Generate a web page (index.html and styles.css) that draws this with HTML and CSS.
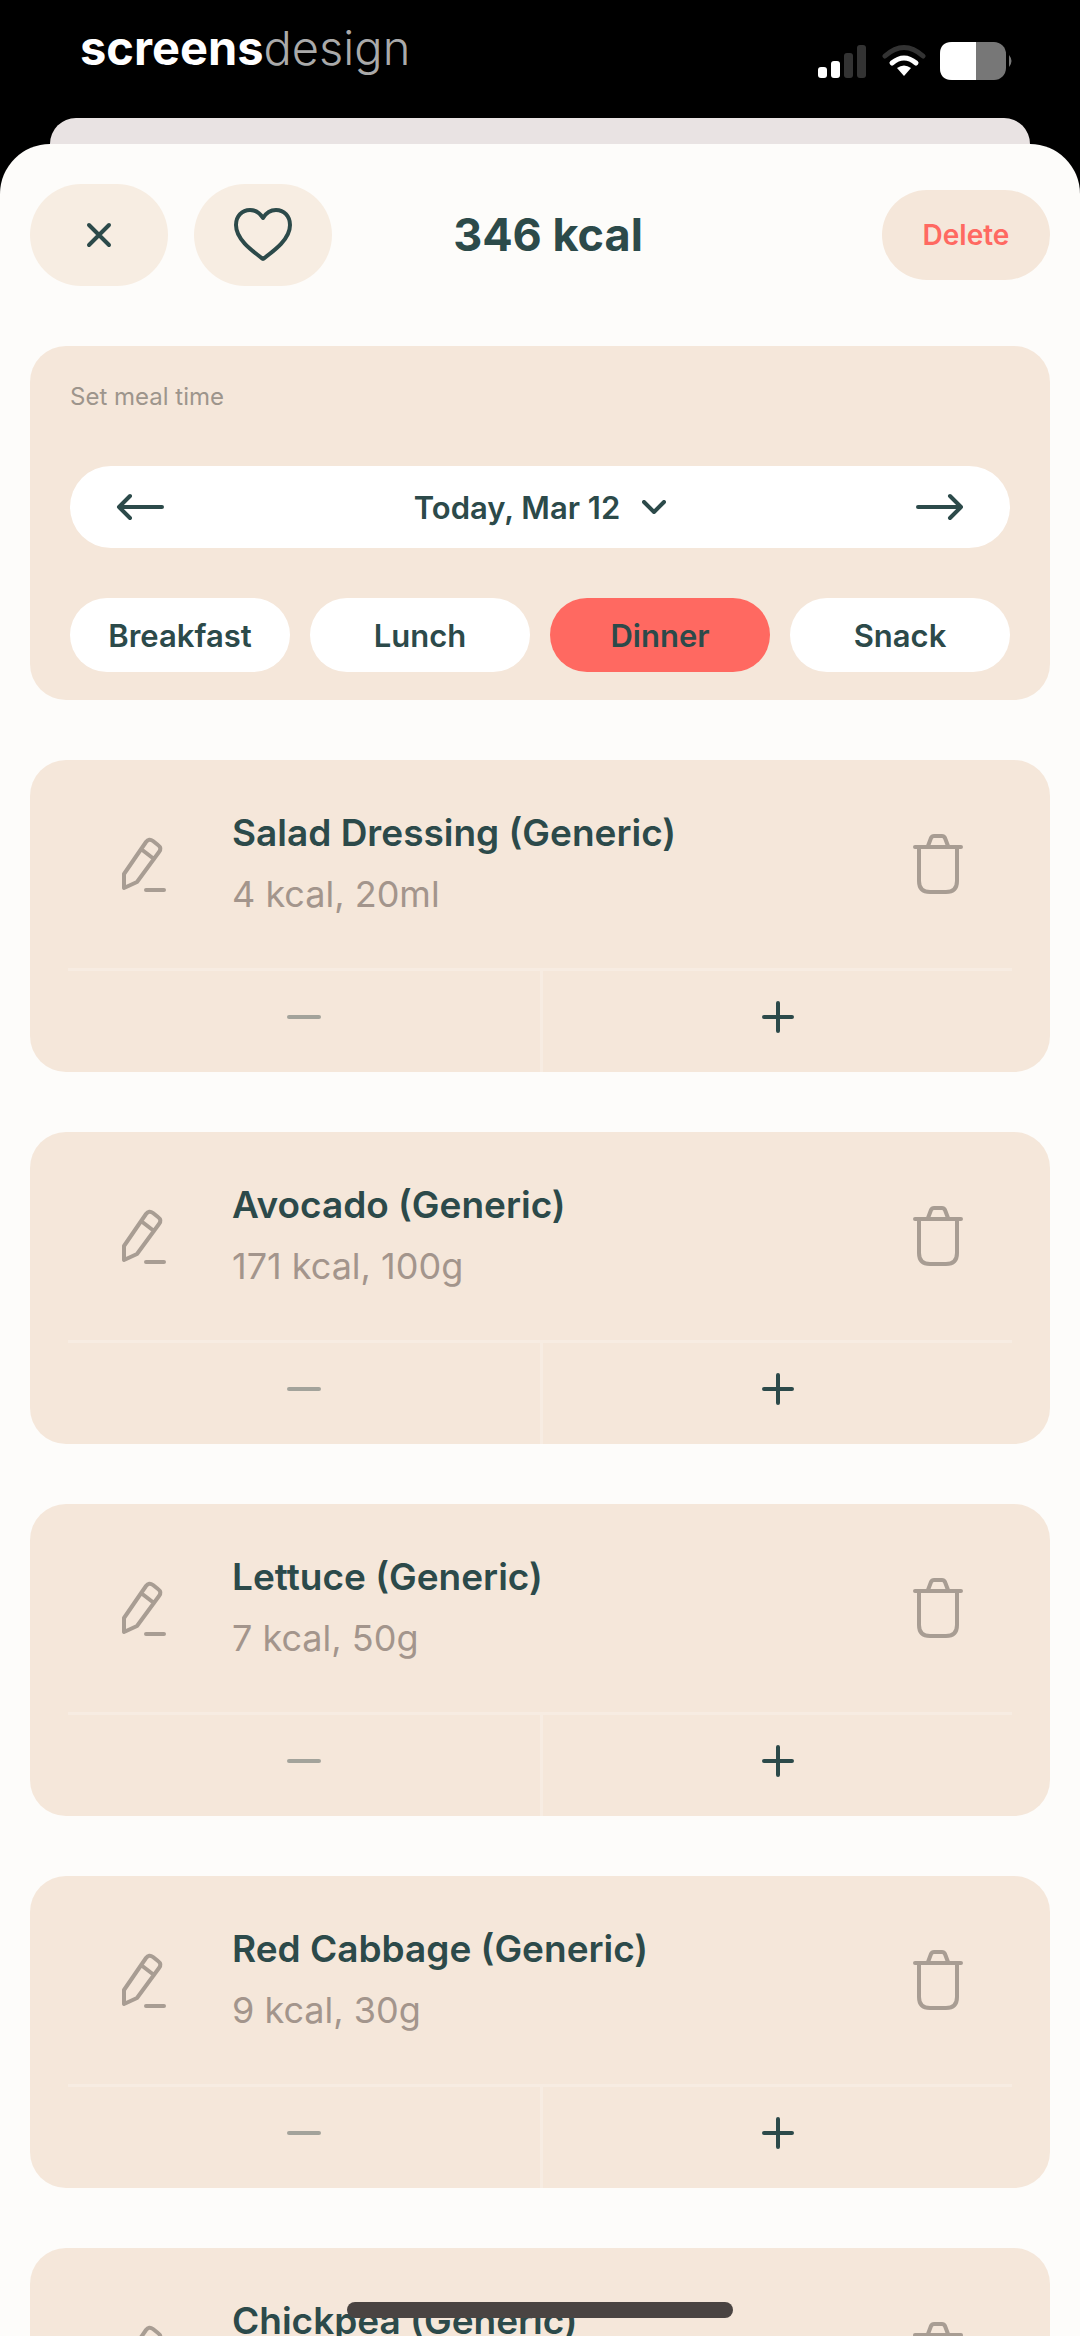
FILE: index.html
```html
<!DOCTYPE html>
<html lang="en">
<head>
    <meta charset="UTF-8">
    <meta name="viewport" content="width=device-width, initial-scale=1.0">
    <title>346 kcal</title>
    <link rel="stylesheet" href="styles.css">
</head>
<body>
    <!-- Icons shared by the food cards -->
    <svg class="icon-defs" aria-hidden="true">
        <symbol id="icon-edit" viewBox="0 0 52 60">
            <path d="M8 40 L30 8 Q33 4 37 7 L42 11 Q46 14 43 18 L21 48 L8 54 Z M25 15 L38 25 M30 56 H48"/>
        </symbol>
        <symbol id="icon-trash" viewBox="0 0 52 64">
            <path d="M3 15 H49 M16 14 L19 6 Q20 4 22 4 H30 Q32 4 33 6 L36 14 M7 16 V49 Q7 60 18 60 H34 Q45 60 45 49 V16"/>
        </symbol>
        <symbol id="icon-minus" viewBox="0 0 36 36">
            <path d="M3 18 H33"/>
        </symbol>
        <symbol id="icon-plus" viewBox="0 0 36 36">
            <path d="M4 18 H32 M18 4 V32"/>
        </symbol>
    </svg>

    <div class="app">
        <div class="status-bar">
            <div class="brand"><b>screens</b>design</div>
            <div class="status-icons">
                <svg width="50" height="36" viewBox="0 0 50 36" aria-hidden="true">
                    <rect x="0" y="24" width="9" height="11" rx="3" fill="#fff"/>
                    <rect x="13" y="18" width="9" height="17" rx="3" fill="#fff"/>
                    <rect x="26" y="10" width="9" height="25" rx="3" fill="#333"/>
                    <rect x="39" y="2" width="9" height="33" rx="3" fill="#333"/>
                </svg>
                <svg width="44" height="34" viewBox="0 0 44 34" aria-hidden="true">
                    <path d="M3 12 Q22 -5 41 12" fill="none" stroke="#333" stroke-width="5"/>
                    <path d="M10 19 Q22 9 34 19" fill="none" stroke="#fff" stroke-width="5"/>
                    <path d="M15 24 Q22 19 29 24 L22 32 Z" fill="#fff"/>
                </svg>
                <svg width="74" height="38" viewBox="0 0 74 38" aria-hidden="true">
                    <rect x="0" y="0" width="66" height="38" rx="12" fill="#777"/>
                    <path d="M12 0 H36 V38 H12 Q0 38 0 26 V12 Q0 0 12 0 Z" fill="#fff"/>
                    <path d="M69 13 Q74 19 69 25 Z" fill="#777"/>
                </svg>
            </div>
        </div>
        <div class="sheet-behind"></div>

        <main class="sheet">
            <header class="header">
                <div class="header-left">
                    <button type="button" class="round-btn" aria-label="Close">
                        <svg width="26" height="26" viewBox="0 0 26 26"><path d="M3 3 L23 23 M23 3 L3 23"/></svg>
                    </button>
                    <button type="button" class="round-btn" aria-label="Favourite">
                        <svg width="60" height="56" viewBox="0 0 60 56"><path d="M30 52 C18 43 3 32 3 18 C3 9 9 3 17 3 C23 3 27 6 30 11 C33 6 37 3 43 3 C51 3 57 9 57 18 C57 32 42 43 30 52 Z"/></svg>
                    </button>
                </div>
                <h1>346 kcal</h1>
                <button type="button" class="delete-btn">Delete</button>
            </header>

            <section class="meal-card">
                <h2>Set meal time</h2>
                <div class="date-picker">
                    <button type="button" aria-label="Previous day">
                        <svg width="48" height="28" viewBox="0 0 48 28"><path d="M46 14 H3 M14 3 L3 14 L14 25"/></svg>
                    </button>
                    <button type="button" class="date">
                        Today, Mar 12
                        <svg width="24" height="14" viewBox="0 0 24 14"><path d="M2 2 L12 12 L22 2"/></svg>
                    </button>
                    <button type="button" aria-label="Next day">
                        <svg width="48" height="28" viewBox="0 0 48 28"><path d="M2 14 H45 M34 3 L45 14 L34 25"/></svg>
                    </button>
                </div>
                <div class="meals">
                    <button type="button">Breakfast</button>
                    <button type="button">Lunch</button>
                    <button type="button" class="active" aria-pressed="true">Dinner</button>
                    <button type="button">Snack</button>
                </div>
            </section>

            <section class="food-card">
                <div class="food-info">
                    <button type="button" aria-label="Edit"><svg width="52" height="60"><use href="#icon-edit"/></svg></button>
                    <div class="food-text">
                        <h3>Salad Dressing (Generic)</h3>
                        <p>4 kcal, 20ml</p>
                    </div>
                    <button type="button" aria-label="Remove"><svg width="52" height="64"><use href="#icon-trash"/></svg></button>
                </div>
                <div class="food-amount">
                    <button type="button" class="minus" aria-label="Less"><svg width="36" height="36"><use href="#icon-minus"/></svg></button>
                    <button type="button" aria-label="More"><svg width="36" height="36"><use href="#icon-plus"/></svg></button>
                </div>
            </section>

            <section class="food-card">
                <div class="food-info">
                    <button type="button" aria-label="Edit"><svg width="52" height="60"><use href="#icon-edit"/></svg></button>
                    <div class="food-text">
                        <h3>Avocado (Generic)</h3>
                        <p>171 kcal, 100g</p>
                    </div>
                    <button type="button" aria-label="Remove"><svg width="52" height="64"><use href="#icon-trash"/></svg></button>
                </div>
                <div class="food-amount">
                    <button type="button" class="minus" aria-label="Less"><svg width="36" height="36"><use href="#icon-minus"/></svg></button>
                    <button type="button" aria-label="More"><svg width="36" height="36"><use href="#icon-plus"/></svg></button>
                </div>
            </section>

            <section class="food-card">
                <div class="food-info">
                    <button type="button" aria-label="Edit"><svg width="52" height="60"><use href="#icon-edit"/></svg></button>
                    <div class="food-text">
                        <h3>Lettuce (Generic)</h3>
                        <p>7 kcal, 50g</p>
                    </div>
                    <button type="button" aria-label="Remove"><svg width="52" height="64"><use href="#icon-trash"/></svg></button>
                </div>
                <div class="food-amount">
                    <button type="button" class="minus" aria-label="Less"><svg width="36" height="36"><use href="#icon-minus"/></svg></button>
                    <button type="button" aria-label="More"><svg width="36" height="36"><use href="#icon-plus"/></svg></button>
                </div>
            </section>

            <section class="food-card">
                <div class="food-info">
                    <button type="button" aria-label="Edit"><svg width="52" height="60"><use href="#icon-edit"/></svg></button>
                    <div class="food-text">
                        <h3>Red Cabbage (Generic)</h3>
                        <p>9 kcal, 30g</p>
                    </div>
                    <button type="button" aria-label="Remove"><svg width="52" height="64"><use href="#icon-trash"/></svg></button>
                </div>
                <div class="food-amount">
                    <button type="button" class="minus" aria-label="Less"><svg width="36" height="36"><use href="#icon-minus"/></svg></button>
                    <button type="button" aria-label="More"><svg width="36" height="36"><use href="#icon-plus"/></svg></button>
                </div>
            </section>

            <section class="food-card">
                <div class="food-info">
                    <button type="button" aria-label="Edit"><svg width="52" height="60"><use href="#icon-edit"/></svg></button>
                    <div class="food-text">
                        <h3>Chickpea (Generic)</h3>
                    </div>
                    <button type="button" aria-label="Remove"><svg width="52" height="64"><use href="#icon-trash"/></svg></button>
                </div>
            </section>
        </main>
        <div class="home-bar"></div>
    </div>
</body>
</html>
```
FILE: styles.css
```css
* { box-sizing: border-box; }
body { margin: 0; background: #000; color: #2c4a4a; font-family: Inter, "Liberation Sans", sans-serif; }
h1, h2, h3, p { margin: 0; }
button { display: flex; align-items: center; justify-content: center; padding: 0; border: none; background: none; color: inherit; font: inherit; cursor: pointer; }
svg { display: block; fill: none; stroke: currentColor; stroke-width: 4; stroke-linecap: round; stroke-linejoin: round; }
.icon-defs { display: none; }

.app { display: flex; flex-direction: column; height: 100vh; overflow: hidden; }

/* Status bar */
.status-bar { flex: none; display: flex; justify-content: space-between; align-items: flex-start; height: 118px; padding: 16px 66px 0 80px; color: #fff; }
.brand { font-size: 47px; line-height: 64px; font-weight: 300; color: #aaa; }
.brand b { font-weight: 700; color: #fff; }
.status-icons { display: flex; align-items: center; gap: 14px; padding-top: 26px; }
.status-icons svg { stroke: none; }
.sheet-behind { flex: none; height: 26px; margin: 0 50px; background: #e9e3e3; border-radius: 26px 26px 0 0; }

/* Sheet */
.sheet { flex: 1; min-height: 0; overflow: hidden; display: flex; flex-direction: column; padding: 40px 30px 0; background: #fdfcfa; border-radius: 50px 50px 0 0; }
.header { flex: none; display: grid; grid-template-columns: 1fr auto 1fr; align-items: center; margin-bottom: 60px; }
.header-left { display: flex; gap: 26px; }
.header h1 { padding-left: 16px; font-size: 45px; line-height: 56px; font-weight: 700; }
.round-btn { width: 138px; height: 102px; border-radius: 51px; background: #f7ede2; }
.delete-btn { justify-self: end; width: 168px; height: 90px; border-radius: 45px; background: #f5e7da; color: #ff6961; font-size: 28px; font-weight: 600; }

/* Meal time */
.meal-card { flex: none; margin-bottom: 60px; padding: 36px 40px 28px; background: #f5e7da; border-radius: 36px; }
.meal-card h2 { margin-bottom: 54px; font-size: 24px; line-height: 30px; font-weight: 400; color: #9d958c; }
.date-picker { display: flex; justify-content: space-between; align-items: center; height: 82px; margin-bottom: 50px; padding: 0 46px; background: #fff; border-radius: 41px; }
.date { gap: 22px; font-size: 31px; font-weight: 600; }
.meals { display: grid; grid-template-columns: repeat(4, 1fr); gap: 20px; }
.meals button { height: 74px; border-radius: 37px; background: #fff; font-size: 31px; font-weight: 600; }
.meals .active { background: #ff6961; }

/* Food cards */
.food-card { flex: none; height: 312px; margin-bottom: 60px; background: #f5e7da; border-radius: 36px; }
.food-info { display: flex; height: 208px; padding: 48px 86px 0; }
.food-info button { height: 112px; color: #a89d93; }
.food-text { flex: 1; padding-left: 64px; }
.food-text h3 { font-size: 37px; line-height: 50px; font-weight: 600; }
.food-text p { margin-top: 12px; font-size: 36px; line-height: 48px; color: #a3958c; }
.food-amount { display: grid; grid-template-columns: 1fr 1fr; height: 104px; margin: 0 38px; border-top: 3px solid #f7ece2; }
.food-amount button { padding-bottom: 10px; }
.food-amount button + button { border-left: 3px solid #f7ece2; }
.food-amount .minus { color: #a3a39b; }

.home-bar { position: fixed; bottom: 18px; left: 50%; width: 386px; height: 16px; margin-left: -193px; border-radius: 8px; background: #4a4442; }
```
